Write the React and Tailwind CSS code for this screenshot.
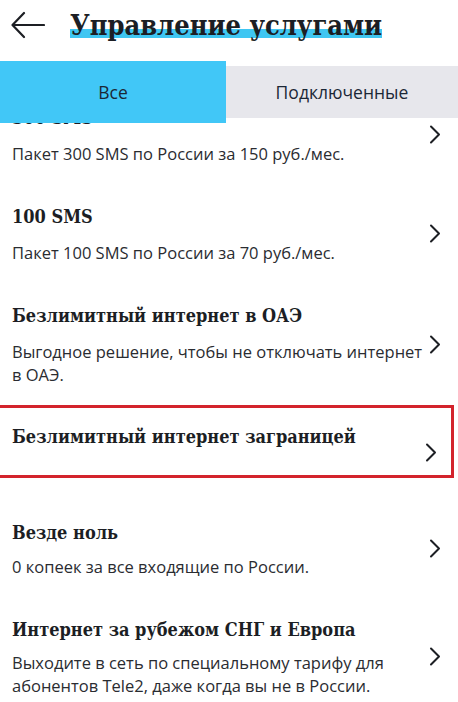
import React from 'react';

const services = [
  { title: '300 SMS', desc: ['Пакет 300 SMS по России за 150 руб./мес.'], gap: 'mt-[10px]' },
  { title: '100 SMS', desc: ['Пакет 100 SMS по России за 70 руб./мес.'], gap: 'mt-[10px]' },
  {
    title: 'Безлимитный интернет в ОАЭ',
    desc: ['Выгодное решение, чтобы не отключать интернет', 'в ОАЭ.'],
    gap: 'mt-[10px]',
  },
  { title: 'Безлимитный интернет заграницей', desc: [], marked: true },
  { title: 'Везде ноль', desc: ['0 копеек за все входящие по России.'], gap: 'mt-[8px]' },
  {
    title: 'Интернет за рубежом СНГ и Европа',
    desc: ['Выходите в сеть по специальному тарифу для', 'абонентов Tele2, даже когда вы не в России.'],
    gap: 'mt-[7px]',
  },
];

const serif = "font-['DejaVu_Serif_Condensed','DejaVu_Serif',serif]";
const sans = "font-['Open_Sans','Noto_Sans',sans-serif]";

const Chevron = () => (
  <svg width="12" height="19" viewBox="0 0 12 19" fill="none" className="shrink-0">
    <path d="M2 1.5 L10 9.5 L2 17.5" stroke="#1d1f24" strokeWidth="2" strokeLinecap="round" strokeLinejoin="round" />
  </svg>
);

const ServiceRow = ({ item }) => {
  if (item.marked) {
    // пункт, обведённый красной рамкой
    return (
      <div className="mb-[22px] mr-[4px] border-y-[3px] border-r-[3px] border-[#d3232c]">
        <div className="flex items-start justify-between h-[67px] pl-[12px] pr-[14px] pt-[15px]">
          <h3 className={`${serif} text-[18px] leading-[28px] font-bold text-[#1c1e24]`}>{item.title}</h3>
          <div className="mt-[20px]">
            <Chevron />
          </div>
        </div>
      </div>
    );
  }

  return (
    <div className="flex items-center justify-between pl-[12px] pr-[17px] py-[19px]">
      <div>
        <h3 className={`${serif} text-[18px] leading-[28px] font-bold text-[#1c1e24]`}>{item.title}</h3>
        <div className={`${sans} ${item.gap} text-[16.5px] leading-[23px] text-[#2a2c31]`}>
          {item.desc.map((line) => (
            <p key={line}>{line}</p>
          ))}
        </div>
      </div>
      <Chevron />
    </div>
  );
};

export default function App() {
  return (
    <div className="w-[458px] h-[702px] overflow-hidden bg-white">
      {/* Header */}
      <div className="relative z-20 flex items-start h-[61px] bg-white">
        <div className="pl-[11px] pr-[25px] pt-[11px]">
          <svg width="34" height="28" viewBox="0 0 34 28" fill="none">
            <path d="M1.5 14 H33 M13 2 L1.5 14 L13 26" stroke="#1d1f24" strokeWidth="2.2" strokeLinecap="round" strokeLinejoin="round" />
          </svg>
        </div>
        <h1 className={`${serif} pt-[9px] text-[27px] leading-[34px] font-bold text-[#1c1e24]`}>
          <span className="bg-[linear-gradient(to_bottom,transparent_62%,#3fc6f2_62%,#3fc6f2_89%,transparent_89%)]">
            Управление услугами
          </span>
        </h1>
      </div>

      {/* Tabs */}
      <div className={`${sans} relative z-10 flex items-center h-[62px] text-[17.5px]`}>
        <div className="w-[226px] h-[62px] bg-[#41c7f7] flex items-center justify-center text-[#1b2736]">
          Все
        </div>
        <div className="flex-1 h-[52px] bg-[#e7e7ec] flex items-center justify-center text-[#1b2736]">
          Подключенные
        </div>
      </div>

      {/* List, scrolled under the tabs */}
      <div className="mt-[-38px]">
        {services.map((item) => (
          <ServiceRow key={item.title} item={item} />
        ))}
      </div>
    </div>
  );
}
